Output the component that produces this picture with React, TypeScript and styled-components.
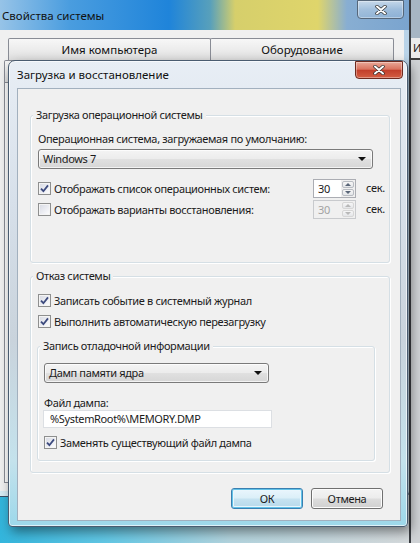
import styled, { createGlobalStyle } from "styled-components";

const GlobalStyle = createGlobalStyle`
  html, body { margin: 0; padding: 0; }
  body {
    font-family: "Noto Sans", "Open Sans", sans-serif;
    font-size: 11px;
    letter-spacing: -0.35px;
    color: #1b1b1b;
    overflow: hidden;
  }
`;

const Desktop = styled.div`
  position: relative;
  width: 420px;
  height: 543px;
  overflow: hidden;
  background: linear-gradient(90deg, #33b5dc 0%, #62c8e6 25%, #b4d5df 55%, #d8dbdd 100%);
`;

/* window in the back */
const BackWindow = styled.div`
  position: absolute;
  left: -6px;
  top: -6px;
  width: 416px;
  height: 503px;
  box-sizing: border-box;
  display: flex;
  flex-direction: column;
  border: 1px solid #3d5066;
  border-radius: 6px;
  overflow: hidden;
  background: linear-gradient(180deg, #b7d2e8 0%, #c9dbe9 80%, #d8ecf4 100%);
`;

const BackTitleBar = styled.div`
  height: 35px;
  display: flex;
  align-items: flex-start;
  padding-left: 7px;
  background: linear-gradient(90deg, #9cc6e8 0%, #4a9ddf 18%, #1f84da 42%, #58a0bb 52%, #d6cf6b 58%, #dfd56b 78%, #88aed2 85%, #7aa4cf 100%);
`;

const WindowText = styled.span`
  font-size: 11.5px;
  letter-spacing: 0;
  line-height: 16px;
  color: #111;
`;

const BackTitle = styled(WindowText)`
  margin-top: 13px;
`;

const CloseButton = styled.div<{ $red?: boolean }>`
  margin-left: auto;
  width: 47px;
  height: 19px;
  box-sizing: border-box;
  display: flex;
  align-items: center;
  justify-content: center;
  border: 1px solid ${p => (p.$red ? "#6e2a1f" : "#56677a")};
  border-radius: 0 0 4px 4px;
  background: ${p =>
    p.$red
      ? "linear-gradient(180deg, #e9a898 0%, #d9735f 45%, #c23f2b 52%, #d45e43 100%)"
      : "linear-gradient(180deg, rgba(255,255,255,0.55) 0%, rgba(255,255,255,0.25) 50%, rgba(255,255,255,0.12) 100%)"};
  box-shadow: inset 0 0 0 1px rgba(255, 255, 255, 0.35);
`;

const BackClose = styled(CloseButton)`
  margin-top: 5px;
  margin-right: 5px;
`;

const BackClient = styled.div`
  flex: 1;
  margin: 0 5px 5px 5px;
  background: #f0f0f0;
  display: flex;
  flex-direction: column;
  padding-top: 8px;
`;

const TabRow = styled.div<{ $left: number }>`
  display: flex;
  padding-left: ${p => p.$left}px;
`;

const Tab = styled.div<{ $w: number }>`
  width: ${p => p.$w}px;
  height: 22px;
  box-sizing: border-box;
  margin-right: -1px;
  border: 1px solid #898c95;
  border-bottom: none;
  border-radius: 2px 2px 0 0;
  background: linear-gradient(180deg, #f7f7f7 0%, #ececec 50%, #dedede 100%);
  display: flex;
  align-items: center;
  justify-content: center;
`;

const TabPanel = styled.div`
  flex: 1;
  margin: 0 6px 8px 4px;
  border: 1px solid #898c95;
  background: #fbfbfb;
`;

/* sliver of another window at the right edge */
const SideWindow = styled.div`
  position: absolute;
  left: 409px;
  top: -4px;
  width: 30px;
  height: 560px;
  display: flex;
  flex-direction: column;
  border-left: 2px solid #3a3d42;
  background: #d0d3d6;
`;

const SideTop = styled.div`
  height: 42px;
  background: #a7b6c4;
`;

const SideCell = styled.div`
  height: 20px;
  background: #ececec;
  line-height: 20px;
  padding-left: 2px;
  color: #222;
  border-bottom: 2px solid #3d3d3d;
`;

/* front dialog */
const Dialog = styled.div`
  position: absolute;
  left: 8px;
  top: 60px;
  width: 400px;
  height: 467px;
  box-sizing: border-box;
  display: flex;
  flex-direction: column;
  padding: 0 6px 5px 8px;
  border: 1px solid #4a5c70;
  border-radius: 7px 7px 4px 4px;
  background: linear-gradient(180deg, #e8eef5 0%, #d7e0ea 30%, #c9d3dc 60%, #c4e2ec 86%, #9dd8ea 100%);
  box-shadow: inset 0 0 0 1px rgba(255, 255, 255, 0.65), 3px 5px 12px rgba(0, 0, 0, 0.45);
`;

const TitleBar = styled.div`
  height: 27px;
  display: flex;
  align-items: flex-start;
`;

const DialogTitle = styled(WindowText)`
  margin-top: 6px;
`;

const DialogClose = styled(CloseButton)`
  margin-right: -2px;
  width: 48px;
  height: 18px;
`;

const Client = styled.div`
  flex: 1;
  box-sizing: border-box;
  border: 1px solid #a2b0be;
  background: #f0f0f0;
  display: flex;
  flex-direction: column;
  padding: 26px 10px 0 12px;
`;

const GroupBox = styled.div<{ $pad: string; $mt?: number; $inner?: boolean }>`
  display: flex;
  flex-direction: column;
  align-items: flex-start;
  margin-top: ${p => p.$mt ?? 0}px;
  ${p => (p.$inner ? "align-self: stretch; margin-left: -1px;" : "")}
  padding: ${p => p.$pad};
  border: 1px solid #d5dfe5;
  border-radius: 3px;
  box-shadow: inset 1px 1px 0 #fff, 1px 1px 0 #fff;
`;

const GroupTitle = styled.span<{ $ml: number }>`
  margin: -9px 0 0 ${p => p.$ml}px;
  padding: 0 3px;
  line-height: 16px;
  background: #f0f0f0;
`;

const Label = styled.span<{ $mt: number; $lh?: number }>`
  margin-top: ${p => p.$mt}px;
  line-height: ${p => p.$lh ?? 16}px;
`;

const Combo = styled.div<{ $w?: number; $mt: number }>`
  margin-top: ${p => p.$mt}px;
  ${p => (p.$w ? `width: ${p.$w}px;` : "align-self: stretch;")}
  height: 20px;
  box-sizing: border-box;
  display: flex;
  align-items: center;
  padding: 0 6px 0 4px;
  border: 1px solid #7a7a7a;
  border-radius: 3px;
  background: linear-gradient(180deg, #f4f4f4 0%, #ececec 48%, #e0e0e0 52%, #d6d6d6 100%);
  box-shadow: inset 0 0 0 1px rgba(255, 255, 255, 0.7);
`;

const ComboText = styled.span`
  flex: 1;
  line-height: 18px;
`;

const Arrow = styled.span`
  width: 0;
  height: 0;
  border-left: 4px solid transparent;
  border-right: 4px solid transparent;
  border-top: 4px solid #111;
`;

const CheckRow = styled.div<{ $mt: number }>`
  margin-top: ${p => p.$mt}px;
  height: 20px;
  display: flex;
  align-items: center;
  gap: 3px;
  white-space: nowrap;
`;

const SpinRow = styled.div<{ $mt: number }>`
  margin-top: ${p => p.$mt}px;
  height: 20px;
  display: grid;
  grid-template-columns: 265px 43px auto;
  column-gap: 10px;
  align-items: center;
`;

const CheckBox = styled.span`
  width: 13px;
  height: 13px;
  box-sizing: border-box;
  flex: none;
  display: flex;
  align-items: center;
  justify-content: center;
  border: 1px solid #8e8f8f;
  background: linear-gradient(135deg, #d6d9e2 0%, #eeeff4 60%, #ffffff 100%);
  box-shadow: inset 0 0 0 1px #f4f4f4;
`;

const Spinner = styled.div<{ $off?: boolean }>`
  height: 19px;
  box-sizing: border-box;
  display: flex;
  border: 1px solid ${p => (p.$off ? "#c8cacd" : "#abadb3")};
  background: ${p => (p.$off ? "#f0f0f0" : "#fff")};
`;

const SpinValue = styled.span<{ $off?: boolean }>`
  flex: 1;
  padding-left: 4px;
  line-height: 17px;
  color: ${p => (p.$off ? "#a3a3a3" : "#1b1b1b")};
`;

const SpinButtons = styled.div`
  width: 14px;
  display: flex;
  flex-direction: column;
  gap: 1px;
  padding: 1px;
  box-sizing: border-box;
  background: #f0f0f0;
`;

const SpinButton = styled.div<{ $off?: boolean }>`
  flex: 1;
  display: flex;
  align-items: center;
  justify-content: center;
  border: 1px solid ${p => (p.$off ? "#d6d6d6" : "#b8bcc2")};
  border-radius: 2px;
  background: linear-gradient(180deg, #f6f6f6, #e4e6e9);
`;

const SpinArrow = styled.span<{ $down?: boolean; $off?: boolean }>`
  width: 0;
  height: 0;
  border-left: 3px solid transparent;
  border-right: 3px solid transparent;
  ${p => (p.$down ? "border-top" : "border-bottom")}: 3px solid ${p => (p.$off ? "#b8b8b8" : "#5a6678")};
`;

const Unit = styled.span`
  line-height: 16px;
`;

const TextInput = styled.div`
  margin: 0 0 0 -1px;
  width: 229px;
  height: 18px;
  box-sizing: border-box;
  border: 1px solid #dcdfe3;
  background: #fff;
  padding-left: 6px;
  line-height: 16px;
`;

const ButtonRow = styled.div`
  margin-top: 15px;
  display: flex;
  justify-content: flex-end;
  gap: 8px;
  padding-right: 7px;
`;

const Button = styled.div<{ $primary?: boolean }>`
  width: 72px;
  height: 21px;
  box-sizing: border-box;
  display: flex;
  align-items: center;
  justify-content: center;
  border: 1px solid ${p => (p.$primary ? "#3a7fb0" : "#707070")};
  border-radius: 3px;
  background: ${p =>
    p.$primary
      ? "linear-gradient(180deg, #eaf6fd 0%, #dbeff8 48%, #c6e3f1 52%, #b6d9ea 100%)"
      : "linear-gradient(180deg, #f4f4f4 0%, #ececec 48%, #dddddd 52%, #d0d0d0 100%)"};
  box-shadow: ${p =>
    p.$primary ? "inset 0 0 0 1px #62c2e8, inset 0 0 0 2px #e9f6fc" : "inset 0 0 0 1px #fcfcfc"};
`;

function CloseGlyph() {
  return (
    <svg width="12" height="10" viewBox="0 0 12 10">
      <path d="M2 1.5 L10 8.5 M10 1.5 L2 8.5" stroke="#2c2c2c" strokeWidth="3.4" strokeLinecap="round" />
      <path d="M2 1.5 L10 8.5 M10 1.5 L2 8.5" stroke="#fff" strokeWidth="2" strokeLinecap="round" />
    </svg>
  );
}

function Check({ on }: { on?: boolean }) {
  return (
    <CheckBox>
      {on && (
        <svg width="9" height="9" viewBox="0 0 9 9">
          <path d="M1 4.6 L3.4 7.2 L8 1.4" fill="none" stroke="#3c4a7e" strokeWidth="1.8" />
        </svg>
      )}
    </CheckBox>
  );
}

function Spin({ value, off }: { value: string; off?: boolean }) {
  return (
    <Spinner $off={off}>
      <SpinValue $off={off}>{value}</SpinValue>
      <SpinButtons>
        <SpinButton $off={off}>
          <SpinArrow $off={off} />
        </SpinButton>
        <SpinButton $off={off}>
          <SpinArrow $down $off={off} />
        </SpinButton>
      </SpinButtons>
    </Spinner>
  );
}

export default function App() {
  return (
    <>
      <GlobalStyle />
      <Desktop>
        <BackWindow>
          <BackTitleBar>
            <BackTitle>Свойства системы</BackTitle>
            <BackClose>
              <CloseGlyph />
            </BackClose>
          </BackTitleBar>
          <BackClient>
            <TabRow $left={8}>
              <Tab $w={203}>
                <WindowText>Имя компьютера</WindowText>
              </Tab>
              <Tab $w={184}>
                <WindowText>Оборудование</WindowText>
              </Tab>
            </TabRow>
            <TabRow $left={4}>
              <Tab $w={127} />
              <Tab $w={131} />
              <Tab $w={134} />
            </TabRow>
            <TabPanel />
          </BackClient>
        </BackWindow>

        <SideWindow>
          <SideTop />
          <SideCell>И.</SideCell>
        </SideWindow>

        <Dialog>
          <TitleBar>
            <DialogTitle>Загрузка и восстановление</DialogTitle>
            <DialogClose $red>
              <CloseGlyph />
            </DialogClose>
          </TitleBar>
          <Client>
            <GroupBox $pad="0 16px 43px 7px">
              <GroupTitle $ml={-5}>Загрузка операционной системы</GroupTitle>
              <Label $mt={8}>Операционная система, загружаемая по умолчанию:</Label>
              <Combo $mt={2}>
                <ComboText>Windows 7</ComboText>
                <Arrow />
              </Combo>
              <SpinRow $mt={9}>
                <CheckRow $mt={0}>
                  <Check on />
                  <span>Отображать список операционных систем:</span>
                </CheckRow>
                <Spin value="30" />
                <Unit>сек.</Unit>
              </SpinRow>
              <SpinRow $mt={1}>
                <CheckRow $mt={0}>
                  <Check />
                  <span>Отображать варианты восстановления:</span>
                </CheckRow>
                <Spin value="30" off />
                <Unit>сек.</Unit>
              </SpinRow>
            </GroupBox>

            <GroupBox $pad="0 14px 11px 7px" $mt={13}>
              <GroupTitle $ml={-5}>Отказ системы</GroupTitle>
              <CheckRow $mt={6}>
                <Check on />
                <span>Записать событие в системный журнал</span>
              </CheckRow>
              <CheckRow $mt={1}>
                <Check on />
                <span>Выполнить автоматическую перезагрузку</span>
              </CheckRow>
              <GroupBox $pad="0 6px 8px 6px" $mt={15} $inner>
                <GroupTitle $ml={-4}>Запись отладочной информации</GroupTitle>
                <Combo $mt={9} $w={225}>
                  <ComboText>Дамп памяти ядра</ComboText>
                  <Arrow />
                </Combo>
                <Label $mt={13} $lh={14}>Файл дампа:</Label>
                <TextInput>%SystemRoot%\MEMORY.DMP</TextInput>
                <CheckRow $mt={4}>
                  <Check on />
                  <span>Заменять существующий файл дампа</span>
                </CheckRow>
              </GroupBox>
            </GroupBox>

            <ButtonRow>
              <Button $primary>ОК</Button>
              <Button>Отмена</Button>
            </ButtonRow>
          </Client>
        </Dialog>
      </Desktop>
    </>
  );
}
